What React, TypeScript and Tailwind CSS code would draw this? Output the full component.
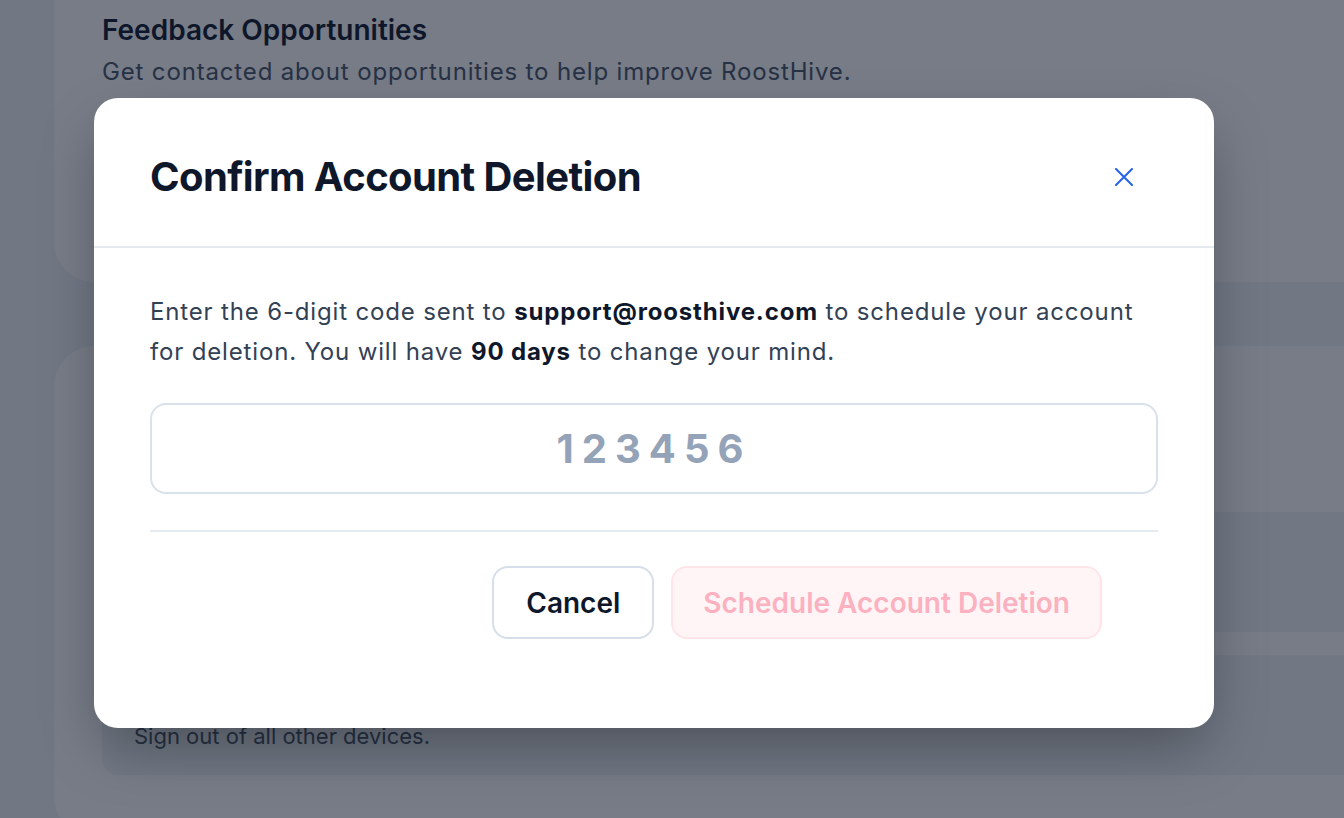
import React from "react";

export default function App() {
  return (
    <div className="relative h-[818px] w-[1344px] overflow-hidden bg-[#f1f5f9] font-['Inter',sans-serif]">
      {/* Background page */}
      <div className="flex flex-col pl-[54px]">
        <div className="h-[282px] w-[1400px] rounded-b-[40px] bg-white px-12 pt-[14px]">
          <h3 className="text-[28px] leading-8 font-semibold text-[#0f172a]">Feedback Opportunities</h3>
          <p className="mt-[10px] text-2xl leading-8 tracking-[0.035em] text-[#475569]">
            Get contacted about opportunities to help improve RoostHive.
          </p>
        </div>
        <div className="mt-16 h-[490px] w-[1400px] rounded-[40px] bg-white px-12 pt-[166px]">
          <div className="h-[120px] rounded-2xl bg-[#f1f5f9]" />
          <div className="mt-[23px] h-[120px] rounded-2xl bg-[#f1f5f9] px-8 pt-[65px]">
            <p className="text-[22px] leading-8 text-[#475569]">Sign out of all other devices.</p>
          </div>
        </div>
      </div>

      {/* Overlay */}
      <div className="absolute inset-0 bg-[rgba(15,23,42,0.565)]" />

      {/* Modal */}
      <div className="absolute left-[94px] top-[98px] w-[1120px] rounded-3xl bg-white shadow-[0_25px_60px_-10px_rgba(0,0,0,0.35)]">
        <div className="flex h-[150px] items-center justify-between border-b-2 border-[#e5eaf0] pl-14 pr-[80px] pt-[10px]">
          <h2 className="text-[40px] leading-[48px] font-bold tracking-[-0.015em] text-[#0f172a]">
            Confirm Account Deletion
          </h2>
          <button className="flex h-5 w-5 items-center justify-center" aria-label="Close">
            <svg width="18" height="18" viewBox="0 0 18 18" fill="none">
              <path d="M1 1L17 17M17 1L1 17" stroke="#2563eb" strokeWidth="2" strokeLinecap="round" />
            </svg>
          </button>
        </div>
        <div className="px-14 pt-11 pb-[89px]">
          <p className="text-2xl leading-10 tracking-[0.035em] text-[#334155]">
            Enter the 6-digit code sent to <span className="font-bold text-[#0f172a]">support@roosthive.com</span> to
            schedule your account for deletion. You will have <span className="font-bold text-[#0f172a]">90 days</span> to
            change your mind.
          </p>
          <div className="mt-[31px] flex h-[91px] items-center justify-center rounded-2xl border-2 border-[#d9e1eb]">
            <span className="text-[40px] leading-[48px] font-bold tracking-[0.2em] text-[#94a3b8]">123456</span>
          </div>
          <div className="mt-[36px] border-t-2 border-[#e5eaf0]" />
          <div className="mt-[34px] flex justify-end gap-[17px] pr-14">
            <button className="h-[73px] rounded-2xl border-2 border-[#d5dee9] bg-white px-[32px] text-[28px] font-semibold text-[#0f172a]">
              Cancel
            </button>
            <button className="h-[73px] rounded-2xl border-2 border-[#ffe4e8] bg-[#fff5f6] px-[30px] text-[28px] font-semibold text-[#fbb1bf]">
              Schedule Account Deletion
            </button>
          </div>
        </div>
      </div>
    </div>
  );
}
